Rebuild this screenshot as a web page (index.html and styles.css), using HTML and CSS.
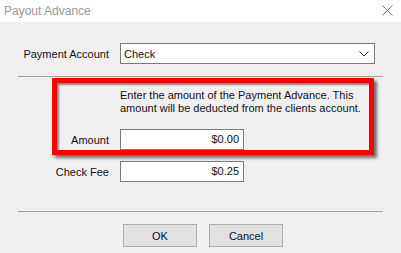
FILE: index.html
```html
<!DOCTYPE html>
<html lang="en">
<head>
    <meta charset="UTF-8">
    <title>Payout Advance</title>
    <link rel="stylesheet" href="styles.css">
</head>
<body>
    <div class="titlebar">
        <span class="title">Payout Advance</span>
        <svg class="close" width="11" height="11" viewBox="0 0 11 11">
            <path d="M0.5 0.5 L10.5 10.5 M10.5 0.5 L0.5 10.5" stroke="#777" stroke-width="1" fill="none"/>
        </svg>
    </div>
    <div class="content">
        <div class="row account">
            <label class="label">Payment Account</label>
            <div class="combo">
                <span>Check</span>
                <svg width="10" height="6" viewBox="0 0 10 6">
                    <path d="M0.5 0.5 L5 5 L9.5 0.5" stroke="#444" stroke-width="1" fill="none"/>
                </svg>
            </div>
        </div>
        <div class="sep"></div>
        <div class="highlight">
            <p class="note">Enter the amount of the Payment Advance. This<br>amount will be deducted from the clients account.</p>
            <div class="row amount">
                <label class="label">Amount</label>
                <div class="field">$0.00</div>
            </div>
        </div>
        <div class="row fee">
            <label class="label">Check Fee</label>
            <div class="field">$0.25</div>
        </div>
        <div class="sep bottom"></div>
        <div class="actions">
            <button class="btn">OK</button>
            <button class="btn">Cancel</button>
        </div>
    </div>
</body>
</html>
```

FILE: styles.css
```css
body {
    margin: 0;
    width: 401px;
    height: 253px;
    overflow: hidden;
    background: #f0f0f0;
    font-family: "Liberation Sans", Arial, sans-serif;
    font-size: 11px;
    color: #10101a;
}
.titlebar {
    height: 22px;
    background: #fff;
    display: flex;
    align-items: center;
    justify-content: space-between;
    padding: 0 8px 0 4px;
}
.title {
    color: #999;
    font-size: 12px;
    padding-bottom: 1px;
}
.close {
    margin-top: -2px;
}
.content {
    padding: 0 18px;
}
.row {
    display: flex;
    align-items: center;
    gap: 11px;
    height: 21px;
}
.label {
    width: 91px;
    text-align: right;
    flex-shrink: 0;
    white-space: nowrap;
}
.account {
    margin-top: 21px;
}
.combo {
    width: 255px;
    height: 21px;
    box-sizing: border-box;
    border: 1px solid #7a7a7a;
    background: #fff;
    display: flex;
    align-items: center;
    justify-content: space-between;
    padding: 0 5px 0 3px;
}
.sep {
    height: 1px;
    background: #a0a0a0;
    margin-top: 12px;
}
.sep.bottom {
    margin-top: 29px;
}
.highlight {
    margin: 1px 9px 0 34px;
    height: 77px;
    box-sizing: border-box;
    border: 5px solid #f00;
    padding: 6px 0 0 0;
    box-shadow: 3px 3px 3px rgba(0, 0, 0, 0.55), inset 2px 2px 2px rgba(0, 0, 0, 0.45);
}
.note {
    margin: 0 0 0 63px;
    line-height: 13px;
    white-space: nowrap;
}
.highlight .amount {
    margin-top: 14px;
}
.highlight .label {
    width: 52px;
}
.field {
    width: 124px;
    height: 21px;
    box-sizing: border-box;
    border: 1px solid #7a7a7a;
    background: #fff;
    text-align: right;
    padding: 0 4px;
    line-height: 19px;
}
.fee {
    margin-top: 6px;
}
.actions {
    display: flex;
    justify-content: center;
    gap: 12px;
    margin-top: 12px;
    padding-left: 5px;
}
.btn {
    width: 74px;
    height: 23px;
    border: 1px solid #adadad;
    background: #e1e1e1;
    font-family: inherit;
    font-size: 11px;
    color: #10101a;
    padding: 0;
}
```
